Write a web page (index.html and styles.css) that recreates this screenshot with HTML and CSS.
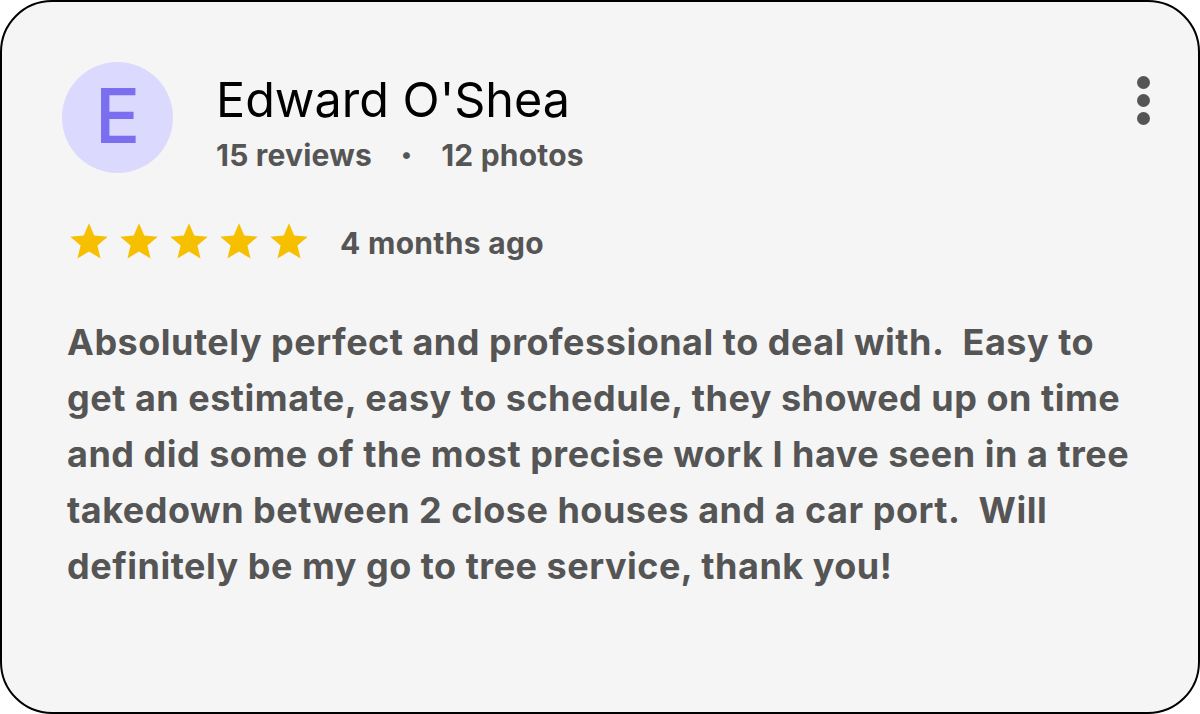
FILE: index.html
```html
<!DOCTYPE html>
<html lang="en">
<head>
    <meta charset="UTF-8">
    <meta name="viewport" content="width=device-width, initial-scale=1.0">
    <title>Review</title>
    <link rel="stylesheet" href="styles.css">
</head>
<body>
<div class="card">
    <div class="header">
        <div class="avatar">E</div>
        <div class="who">
            <div class="name">Edward O'Shea</div>
            <div class="meta">15 reviews <span class="dot">&bull;</span> 12 photos</div>
        </div>
        <div class="more">
            <span></span><span></span><span></span>
        </div>
    </div>

    <div class="rating">
        <div class="stars">
            <svg viewBox="0 0 24 24"><path d="M12 1.8l3 7.1 7.7.6-5.9 5 1.8 7.5L12 18l-6.6 4 1.8-7.5-5.9-5 7.7-.6z"/></svg>
            <svg viewBox="0 0 24 24"><path d="M12 1.8l3 7.1 7.7.6-5.9 5 1.8 7.5L12 18l-6.6 4 1.8-7.5-5.9-5 7.7-.6z"/></svg>
            <svg viewBox="0 0 24 24"><path d="M12 1.8l3 7.1 7.7.6-5.9 5 1.8 7.5L12 18l-6.6 4 1.8-7.5-5.9-5 7.7-.6z"/></svg>
            <svg viewBox="0 0 24 24"><path d="M12 1.8l3 7.1 7.7.6-5.9 5 1.8 7.5L12 18l-6.6 4 1.8-7.5-5.9-5 7.7-.6z"/></svg>
            <svg viewBox="0 0 24 24"><path d="M12 1.8l3 7.1 7.7.6-5.9 5 1.8 7.5L12 18l-6.6 4 1.8-7.5-5.9-5 7.7-.6z"/></svg>
        </div>
        <span class="when">4 months ago</span>
    </div>

    <p class="text">Absolutely perfect and professional to deal with.&nbsp; Easy to get an estimate, easy to schedule, they showed up on time and did some of the most precise work I have seen in a tree takedown between 2 close houses and a car port.&nbsp; Will definitely be my go to tree service, thank you!</p>
</div>
</body>
</html>
```

FILE: styles.css
```css
body {
    margin: 0;
    background: #ffffff;
    font-family: Inter, "Noto Sans", sans-serif;
}

.card {
    box-sizing: border-box;
    height: 714px;
    border: 2.5px solid #000;
    border-radius: 52px;
    background-color: #f5f5f5;
    padding: 60px 48px 0 60px;
}

.header {
    display: flex;
    align-items: flex-start;
}

.avatar {
    width: 111px;
    height: 111px;
    border-radius: 50%;
    background-color: #dcd9fe;
    color: #7b6ff0;
    font-size: 75px;
    font-weight: 500;
    line-height: 107px;
    text-align: center;
    flex-shrink: 0;
}

.who {
    margin-left: 43px;
    flex: 1;
}

.name {
    font-size: 48.5px;
    line-height: 58px;
    color: #000;
    margin-top: 9px;
}

.meta {
    font-size: 30px;
    font-weight: 700;
    letter-spacing: 0.2px;
    color: #555;
    margin-top: 8px;
}

.dot {
    font-size: 22px;
    vertical-align: 4px;
    margin: 0 22px 0 22px;
}

.more {
    display: flex;
    flex-direction: column;
    gap: 5px;
    margin-top: 14px;
}

.more span {
    width: 13px;
    height: 13px;
    border-radius: 50%;
    background-color: #555;
}

.rating {
    display: flex;
    align-items: center;
    margin-top: 47px;
    padding-left: 6px;
}

.stars {
    display: flex;
    gap: 8px;
}

.stars svg {
    width: 42px;
    height: 42px;
    fill: #f6bf00;
}

.when {
    font-size: 30px;
    font-weight: 700;
    letter-spacing: 0.3px;
    color: #555;
    margin-left: 30px;
    margin-top: 3px;
}

.text {
    margin: 52px 0 0;
    padding-left: 5px;
    font-size: 36px;
    line-height: 56px;
    font-weight: 700;
    letter-spacing: 0.5px;
    color: #555;
}
```
